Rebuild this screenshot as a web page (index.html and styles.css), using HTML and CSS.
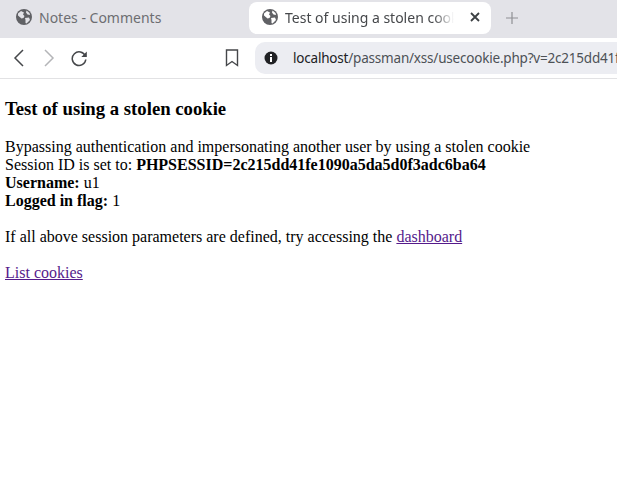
FILE: index.html
```html
<!DOCTYPE html>

<html>
    <head>
        <title>Test of using a stolen cookie</title>
        <link rel="stylesheet" href="styles.css">
    </head>
    <body>
        <div class="b-tabs">
            <div class="b-tab">
                <svg class="b-globe" viewBox="0 0 16 16"><circle cx="8" cy="8" r="8" fill="currentColor"/><path d="M2 4.500l3-2.500 3 1.500-1 2 1.500 1.500-1 2-2 .5-3.500-3zM9 9l4-.5 1 2.500-3.500 3.500-1-.5 0-3zM10.500 1.500l3 2.500 .5 2-2.500-.5-1.500-2z" fill="#e3e3e8"/></svg>
                <span class="b-tab-title">Notes - Comments</span>
            </div>
            <div class="b-tab b-tab-active">
                <svg class="b-globe" viewBox="0 0 16 16"><circle cx="8" cy="8" r="8" fill="currentColor"/><path d="M2 4.500l3-2.500 3 1.500-1 2 1.500 1.500-1 2-2 .5-3.500-3zM9 9l4-.5 1 2.500-3.500 3.500-1-.5 0-3zM10.500 1.500l3 2.500 .5 2-2.500-.5-1.500-2z" fill="#fff"/></svg>
                <span class="b-tab-title">Test of using a stolen cookie</span>
                <svg class="b-close" viewBox="0 0 10 10"><path d="M1 1l8 8M9 1l-8 8" stroke="#3c4043" stroke-width="1.800" fill="none"/></svg>
            </div>
            <svg class="b-new" viewBox="0 0 12 12"><path d="M6 0v12M0 6h12" stroke="#8f9094" stroke-width="1.200" fill="none"/></svg>
        </div>
        <div class="b-toolbar">
            <svg class="b-icon" viewBox="0 0 16 20"><path d="M12 2L4 10l8 8" stroke="#45474a" stroke-width="1.500" fill="none"/></svg>
            <svg class="b-icon" viewBox="0 0 16 20"><path d="M4 2l8 8-8 8" stroke="#b4b5b8" stroke-width="1.500" fill="none"/></svg>
            <svg class="b-icon b-reload" viewBox="0 0 18 18"><path d="M15.300 7A6.800 6.800 0 1 0 15.800 10.500" stroke="#45474a" stroke-width="1.500" fill="none"/><path d="M16.800 2.500V8h-5.500z" fill="#45474a"/></svg>
            <svg class="b-bookmark" viewBox="0 0 14 18"><path d="M1.500 1h11v15.500L7 12.500l-5.500 4z" stroke="#45474a" stroke-width="1.400" fill="none"/></svg>
            <div class="b-address">
                <svg class="b-info" viewBox="0 0 14 14"><circle cx="7" cy="7" r="6.500" fill="#202124"/><path d="M6 6h2v5H6zM6 3h2v2H6z" fill="#fff"/></svg>
                <span class="b-url"><span class="b-host">localhost</span>/passman/xss/usecookie.php?v=2c215dd41fe1090a5da5d0f3adc6ba64</span>
            </div>
        </div>
        <div class="a-page">
            <h3>Test of using a stolen cookie</h3>
            <p>
                Bypassing authentication and impersonating another user by using a stolen cookie<br/>
                Session ID is set to: <b>PHPSESSID=2c215dd41fe1090a5da5d0f3adc6ba64</b><br/>
                <b>Username:</b> u1<br/>
                <b>Logged in flag:</b> 1
            </p>
            <p>If all above session parameters are defined, try accessing the <a href="#">dashboard</a></p>
            <p><a href="#">List cookies</a></p>
        </div>
    </body>

</html>
```

FILE: styles.css
```css
* {box-sizing: border-box;}
html, body {height: 100%;}
body {margin: 0; overflow: hidden; background-color: #fff; font-family: "Liberation Serif", serif; font-size: 16px; color: #000;}

/* browser chrome */
.b-tabs {display: flex; align-items: flex-start; height: 38px; padding: 2px 0 0 7px; background-color: #e3e3e8; font-family: "Noto Sans", sans-serif; font-size: 14px;}
.b-tab {display: flex; align-items: center; height: 32px; width: 242px; padding: 0 9px 2px 9px; color: #6d6e72;}
.b-tab-active {background-color: #fff; border-radius: 8px; color: #46484b; padding: 0 11px 2px 13px;}
.b-tab-title {flex: 1; overflow: hidden; white-space: nowrap; margin-left: 7px;}
.b-tab-active .b-tab-title {-webkit-mask-image: linear-gradient(to right, #000 88%, transparent 100%); mask-image: linear-gradient(to right, #000 88%, transparent 100%);}
.b-globe {width: 16px; height: 16px; flex: none; color: #606165;}
.b-close {width: 10px; height: 10px; flex: none; margin-left: 16px;}
.b-new {width: 12px; height: 12px; margin: 10px 0 0 15px;}

.b-toolbar {display: flex; align-items: center; height: 41px; padding: 0 0 0 11px; background-color: #fff; border-bottom: 1px solid #e2e2e4; border-radius: 8px 0 0 0;}
.b-icon {width: 16px; height: 20px; flex: none; margin-right: 14px;}
.b-icon + .b-icon {margin-right: 13px;}
.b-reload {width: 18px; height: 18px;}
.b-bookmark {width: 14px; height: 18px; flex: none; margin-left: 124px;}
.b-address {display: flex; align-items: center; flex: 1; min-width: 0; height: 32px; margin-left: 16px; padding-left: 9px; background-color: #ecedf2; border-radius: 10px 0 0 10px; font-family: "Noto Sans", sans-serif; font-size: 13.5px; letter-spacing: -0.2px; color: #4d5156;}
.b-info {width: 14px; height: 14px; flex: none; margin-right: 15px;}
.b-url {white-space: nowrap; overflow: hidden;}
.b-host {color: #202124;}

/* page */
.a-page {padding: 0 5px;}
h3 {margin: 18.72px 0; font-size: 18.72px;}
p {margin: 18px 0; line-height: 18px;}
a {color: #551a8b;}
```
